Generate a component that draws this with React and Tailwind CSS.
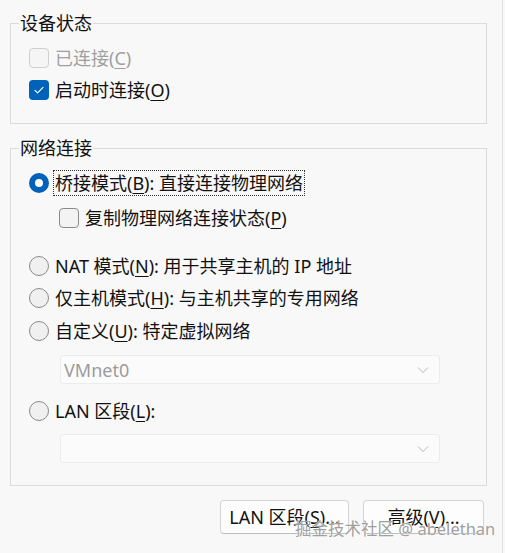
// 虚拟机设置：网络适配器面板（设备状态 + 网络连接）
import { useState } from 'react';

const FUENTE = { fontFamily: '"Noto Sans", "Noto Sans CJK SC", sans-serif' };

function Casilla({ marcado, deshabilitado, onChange }) {
  if (marcado) {
    return (
      <span onClick={onChange} className="w-5 h-5 shrink-0 rounded-[4px] bg-[#0062b8] flex items-center justify-center">
        <svg width="12" height="12" viewBox="0 0 12 12" fill="none">
          <path d="M2 6.3l2.6 2.6L10 3.4" stroke="white" strokeWidth="1.2" strokeLinecap="round" strokeLinejoin="round" />
        </svg>
      </span>
    );
  }
  return (
    <span onClick={onChange}
      className={`w-5 h-5 shrink-0 rounded-[4px] border ${deshabilitado ? 'border-[#cfcfcf] bg-[#f5f5f5]' : 'border-[#8a8a8a] bg-[#f3f3f3]'}`} />
  );
}

function Radio({ marcado, onChange }) {
  if (marcado) {
    return (
      <span onClick={onChange} className="w-5 h-5 shrink-0 rounded-full bg-[#0062b8] flex items-center justify-center">
        <span className="w-2 h-2 rounded-full bg-white" />
      </span>
    );
  }
  return <span onClick={onChange} className="w-5 h-5 shrink-0 rounded-full border border-[#8a8a8a] bg-[#f0f0f0]" />;
}

function Atajo({ children }) {
  return <span className="underline underline-offset-[3px] decoration-1">{children}</span>;
}

function Desplegable({ valor }) {
  return (
    <div className="ml-[49px] w-[380px] h-[29px] border border-[#ececec] rounded-[3px] bg-[#fbfbfb] flex items-center justify-between pl-[3px] pr-[10px]">
      <span className="text-[#9b9b9b]">{valor}</span>
      <svg width="12" height="8" viewBox="0 0 12 8" fill="none">
        <path d="M1 1.5l5 5 5-5" stroke="#b5b5b5" strokeWidth="1" />
      </svg>
    </div>
  );
}

export default function App() {
  const [alIniciar, setAlIniciar] = useState(true);
  const [copiar, setCopiar] = useState(false);
  const [modo, setModo] = useState('bridge');

  return (
    <div style={FUENTE} className="relative w-[505px] h-[553px] bg-[#f8f8f8] text-[18px] text-[#111] leading-[24px] overflow-hidden">
      <div className="w-[503px] h-full border-r border-[#e2e2e2] pl-[10px] pt-[11px]">
        <fieldset className="w-[477px] border border-[#dcdcdc] pl-[18px] pb-[17px] pt-[7px]">
          <legend className="-ml-[10px] px-px">设备状态</legend>
          <label className="h-[32px] flex items-center gap-[6px] text-[#9f9f9f]">
            <Casilla deshabilitado />
            <span>已连接(<Atajo>C</Atajo>)</span>
          </label>
          <label className="h-[32px] flex items-center gap-[6px]">
            <Casilla marcado={alIniciar} onChange={() => setAlIniciar(!alIniciar)} />
            <span>启动时连接(<Atajo>O</Atajo>)</span>
          </label>
        </fieldset>

        <fieldset className="mt-[12px] w-[477px] border border-[#dcdcdc] pl-[18px] pb-[22px] pt-[7px]">
          <legend className="-ml-[10px] px-px">网络连接</legend>
          <label className="h-[32px] flex items-center gap-[6px]">
            <Radio marcado={modo === 'bridge'} onChange={() => setModo('bridge')} />
            <span className="outline-1 outline-dotted outline-[#333] px-px -ml-px">桥接模式(<Atajo>B</Atajo>): 直接连接物理网络</span>
          </label>
          <label className="mt-[3px] ml-[30px] h-[32px] flex items-center gap-[6px]">
            <Casilla marcado={copiar} onChange={() => setCopiar(!copiar)} />
            <span>复制物理网络连接状态(<Atajo>P</Atajo>)</span>
          </label>
          <label className="mt-[16px] h-[32px] flex items-center gap-[6px]">
            <Radio marcado={modo === 'nat'} onChange={() => setModo('nat')} />
            <span>NAT 模式(<Atajo>N</Atajo>): 用于共享主机的 IP 地址</span>
          </label>
          <label className="h-[32px] flex items-center gap-[6px]">
            <Radio marcado={modo === 'host'} onChange={() => setModo('host')} />
            <span>仅主机模式(<Atajo>H</Atajo>): 与主机共享的专用网络</span>
          </label>
          <label className="mt-px h-[32px] flex items-center gap-[6px]">
            <Radio marcado={modo === 'custom'} onChange={() => setModo('custom')} />
            <span>自定义(<Atajo>U</Atajo>): 特定虚拟网络</span>
          </label>
          <div className="mt-[8px] -ml-[18px]">
            <Desplegable valor="VMnet0" />
          </div>
          <label className="mt-[11px] h-[32px] flex items-center gap-[6px]">
            <Radio marcado={modo === 'lan'} onChange={() => setModo('lan')} />
            <span>LAN 区段(<Atajo>L</Atajo>):</span>
          </label>
          <div className="mt-[7px] -ml-[18px]">
            <Desplegable valor="" />
          </div>
        </fieldset>

        <div className="mt-[14px] w-[474px] flex justify-end gap-[14px]">
          <button className="w-[129px] h-[34px] rounded-[4px] border border-[#d4d4d4] border-b-[#bdbdbd] bg-[#fdfdfd]">
            LAN 区段(<Atajo>S</Atajo>)...
          </button>
          <button className="w-[121px] h-[34px] rounded-[4px] border border-[#d4d4d4] border-b-[#bdbdbd] bg-[#fdfdfd]">
            高级(<Atajo>V</Atajo>)...
          </button>
        </div>
      </div>

      <span className="absolute left-[295px] top-[517px] text-[16.5px] text-[#a0a0a0] pointer-events-none [text-shadow:0_0_1px_#fff,0_0_1px_#fff]">
        掘金技术社区 @ abelethan
      </span>
    </div>
  );
}
